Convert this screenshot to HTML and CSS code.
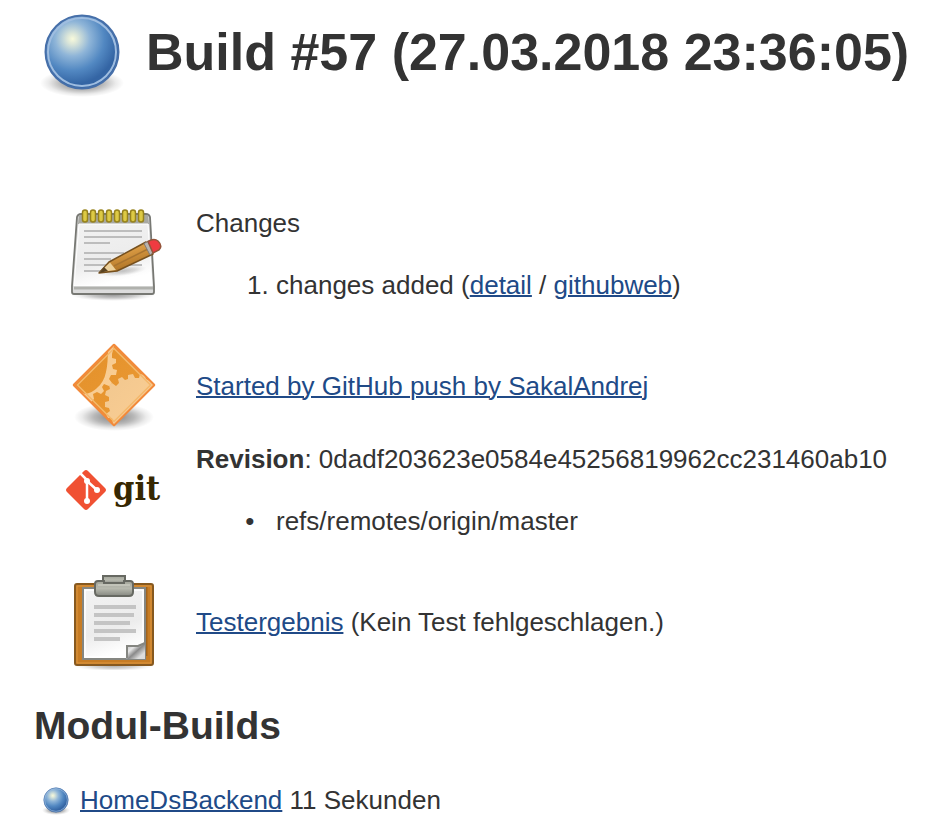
FILE: index.html
```html
<!DOCTYPE html>
<html lang="de">
<head>
<meta charset="utf-8">
<meta name="viewport" content="width=device-width, initial-scale=1">
<title>Build #57</title>
<link rel="stylesheet" href="styles.css">
</head>
<body>
<svg class="defs" width="0" height="0" aria-hidden="true">
  <defs>
    <radialGradient id="ball" cx=".37" cy=".32" r=".62">
      <stop offset="0" stop-color="#f8fadb"/><stop offset=".12" stop-color="#dbe6d9"/>
      <stop offset=".38" stop-color="#8fb5d8"/><stop offset=".7" stop-color="#5288c2"/>
      <stop offset="1" stop-color="#3465a4"/>
    </radialGradient>
    <radialGradient id="shade">
      <stop offset="0" stop-color="#000" stop-opacity=".5"/>
      <stop offset=".5" stop-color="#000" stop-opacity=".28"/>
      <stop offset=".8" stop-color="#000" stop-opacity=".08"/>
      <stop offset="1" stop-color="#000" stop-opacity="0"/>
    </radialGradient>
    <linearGradient id="paper" x2=".3" y2="1">
      <stop offset="0" stop-color="#f2f2f2"/><stop offset=".65" stop-color="#ececec"/><stop offset="1" stop-color="#fff"/>
    </linearGradient>
    <linearGradient id="wood" x2=".45" y2="1">
      <stop offset="0" stop-color="#e9b866"/><stop offset=".5" stop-color="#d4953f"/><stop offset="1" stop-color="#a66d22"/>
    </linearGradient>
    <linearGradient id="metal" x2="0" y2="1">
      <stop offset="0" stop-color="#a3a59b"/><stop offset=".5" stop-color="#b7b9ae"/><stop offset="1" stop-color="#858780"/>
    </linearGradient>
    <linearGradient id="curl" x2="1" y2="1">
      <stop offset="0" stop-color="#b4b4b4"/><stop offset=".35" stop-color="#e6e6e6"/><stop offset=".55" stop-color="#8a8a8a"/><stop offset=".8" stop-color="#ddd"/>
    </linearGradient>
    <linearGradient id="amber" x2="1" y2="1">
      <stop offset="0" stop-color="#e2902a"/><stop offset="1" stop-color="#ed9b35"/>
    </linearGradient>
    <linearGradient id="cream" x2="1" y2="1">
      <stop offset="0" stop-color="#f1c78f"/><stop offset="1" stop-color="#fccf94"/>
    </linearGradient>
    <symbol id="status" viewBox="0 0 96 96">
      <ellipse cx="48" cy="79" rx="42" ry="14" fill="url(#shade)"/>
      <circle cx="48" cy="48" r="36.5" fill="url(#ball)" stroke="#466fa9" stroke-width="2"/>
      <circle cx="48" cy="48" r="34" fill="none" stroke="#9fbde0" stroke-width="2"/>
    </symbol>
  </defs>
</svg>

<main class="build">
  <header class="title">
    <svg class="icon" role="img" aria-label="Erfolgreich"><use href="#status"/></svg>
    <h1>Build #57 (27.03.2018 23:36:05)</h1>
  </header>

  <div class="summary">
    <section class="entry">
      <svg class="icon" viewBox="0 2 96 96" aria-hidden="true">
        <ellipse cx="47" cy="91" rx="42" ry="6" fill="url(#shade)" opacity=".8"/>
        <path d="M11 13Q12 10 15 10H80Q83 10 84 13L88 82V88Q88 90 86 90H8Q6 90 6 88V82Z" fill="#dcdcdc" stroke="#777873" stroke-width="1.8"/>
        <path d="M13 11H82L83 20H12Z" fill="#a7a8a2"/>
        <path d="M13 20H82L86 82H8Z" fill="url(#paper)" stroke="#fff" stroke-width="1"/>
        <path d="M8 84H87" stroke="#b0b1ad" stroke-width="3"/>
        <path d="M18 27H76M18 33H76M18 39H44M18 49H58M18 55H45M18 61H40M18 67H35M62 61H76" stroke="#bdbdbd" stroke-width="2"/>
        <g fill="#ddca45" stroke="#97831d" stroke-width="1.5">
          <rect x="16.500" y="6" width="5" height="12" rx="2.500"/><rect x="24.500" y="6" width="5" height="12" rx="2.500"/>
          <rect x="32.500" y="6" width="5" height="12" rx="2.500"/><rect x="40.500" y="6" width="5" height="12" rx="2.500"/>
          <rect x="48.500" y="6" width="5" height="12" rx="2.500"/><rect x="56.500" y="6" width="5" height="12" rx="2.500"/>
          <rect x="64.500" y="6" width="5" height="12" rx="2.500"/><rect x="72.500" y="6" width="5" height="12" rx="2.500"/>
        </g>
        <ellipse cx="57" cy="67" rx="24" ry="5" fill="url(#shade)" opacity=".45" transform="rotate(-7 57 67)"/>
        <path d="M33 69L43 58L80 38L87 50L51 67Z" fill="url(#wood)" stroke="#76501e" stroke-width="1.500" stroke-linejoin="round"/>
        <path d="M34 68L44 58.500L50 66Z" fill="#ecd19c"/>
        <path d="M33 69L38 63L42 67Z" fill="#584222"/>
        <path d="M48 62L82 45" stroke="#a87430" stroke-width="1.500"/>
        <path d="M78 39.500L83 37L88 48L84 51Z" fill="#b8b4b0" stroke="#817a76"/>
        <path d="M82 37.500Q88 34 92 37Q97 42 93 46L87 49Z" fill="#ef3b41" stroke="#94543a" stroke-width="1.500"/>
      </svg>
      <div class="content">
        <p>Changes</p>
        <ol><li>changes added (<a href="#detail">detail</a> / <a href="#githubweb">githubweb</a>)</li></ol>
      </div>
    </section>

    <section class="entry">
      <svg class="icon" viewBox="0 0 96 96" aria-hidden="true">
        <clipPath id="diamond"><path d="M48 8L87 47L48 86L9 47Z"/></clipPath>
        <ellipse cx="48" cy="79" rx="40" ry="14" fill="url(#shade)"/>
        <path d="M48 7L88 47L48 87L8 47Z" fill="url(#amber)" stroke="#f28a3b" stroke-width="2.500" stroke-linejoin="round"/>
        <g clip-path="url(#diamond)">
          <path d="M42 8H48L46 16L46 20L50 21V25L46 27L47 31L51 32L50 37L45 37L43 41L46 45L43 48L38 46L36 49L38 53L35 56L31 54L27 56L28 61L24 65L6 50L19 56Q26 55 31 50Q38 44 40 34Q42 26 42 8Z" fill="url(#cream)"/>
          <path d="M44 51L43 47L46 45L50 48L53 45L52 41L56 39L59 42L62 41L62 37L67 36L69 40L73 40L74 36L79 37L80 41L92 47L48 92L46 80L42 80L40 76L44 73L43 70L39 69L39 64L43 63L43 59L39 57L40 53Z" fill="url(#cream)"/>
        </g>
        <path d="M48 10.500L84.500 47L48 83.500L11.500 47Z" fill="none" stroke="#f4b86b" stroke-width="1.500"/>
      </svg>
      <div class="content"><p><a href="#cause">Started by GitHub push by SakalAndrej</a></p></div>
    </section>

    <section class="entry">
      <svg class="icon" viewBox="0 0 96 96" role="img" aria-label="git">
        <path d="M18 29Q20 27 22 29L39 46Q41 48 39 50L22 67Q20 69 18 67L1 50Q-1 48 1 46Z" fill="#f05133"/>
        <path d="M14 31L21 38V60M21 39L31 48" fill="none" stroke="#fff" stroke-width="2.500"/>
        <circle cx="21" cy="39" r="3" fill="#fff"/><circle cx="31" cy="48" r="3" fill="#fff"/><circle cx="21" cy="59" r="3" fill="#fff"/>
        <text class="wordmark" x="47" y="58">git</text>
      </svg>
      <div class="content">
        <p><b>Revision</b>: 0dadf203623e0584e45256819962cc231460ab10</p>
        <ul><li>refs/remotes/origin/master</li></ul>
      </div>
    </section>

    <section class="entry">
      <svg class="icon" viewBox="0 0 96 96" aria-hidden="true">
        <ellipse cx="48" cy="92" rx="40" ry="5" fill="url(#shade)" opacity=".6"/>
        <rect x="9" y="10" width="78" height="81" rx="2" fill="#c77c24" stroke="#87591f" stroke-width="2"/>
        <rect x="11" y="12" width="74" height="77" fill="none" stroke="#dc9641"/>
        <path d="M80 13V82" stroke="#a2641d" stroke-width="3"/>
        <rect x="17" y="14" width="62" height="71" fill="url(#paper)" stroke="#858681" stroke-width="2"/>
        <rect x="19" y="16" width="58" height="67" fill="none" stroke="#fff" stroke-width="1.500"/>
        <path d="M28 33H70M28 41H68M28 49H64M28 57H70M28 65H54" stroke="#c4c4c4" stroke-width="4"/>
        <path d="M60 72H72L79 68V85H60Z" fill="url(#curl)"/>
        <path d="M61 84V72H72L79 69" fill="none" stroke="#858681" stroke-width="2"/>
        <path d="M37 2H59V10H37Z" fill="url(#metal)" stroke="#676962" stroke-width="2"/>
        <path d="M32 7H38V9H58V7H64Q67 7 67 10V18Q67 22 63 22H33Q29 22 29 18V10Q29 7 32 7Z" fill="url(#metal)" stroke="#676962" stroke-width="2"/>
        <path d="M32 11H64" stroke="#c8cabf" stroke-width="1.500"/>
      </svg>
      <div class="content"><p><a href="#tests">Testergebnis</a> (Kein Test fehlgeschlagen.)</p></div>
    </section>
  </div>

  <h2>Modul-Builds</h2>
  <div class="module">
    <svg class="dot" role="img" aria-label="Erfolgreich"><use href="#status"/></svg>
    <p><a href="#module">HomeDsBackend</a> 11 Sekunden</p>
  </div>
</main>
</body>
</html>
```
FILE: styles.css
```css
* { box-sizing: border-box; }
body {
  margin: 0;
  background: #fff;
  color: #333;
  font: 26px/30px "Liberation Sans", Arial, sans-serif;
}
a {
  color: #204a87;
  text-decoration: underline;
  text-decoration-thickness: 2px;
}
h1, h2, p { margin: 0; }
.defs { position: absolute; }
.build { padding: 4px 16px 12px 34px; }
.title {
  display: flex;
  align-items: center;
  gap: 16px;
}
h1 {
  font-size: 52px;
  line-height: 60px;
}
.icon {
  flex: none;
  width: 96px;
  height: 96px;
}
.summary {
  display: grid;
  gap: 8px;
  margin: 106px 0 0 32px;
}
.entry {
  display: flex;
  align-items: center;
  gap: 34px;
}
.entry:first-child { margin-bottom: 28px; }
.entry:last-child { margin-top: 28px; }
ol, ul {
  margin: 32px 0 0;
  padding-left: 80px;
}
ul { list-style-type: "•\00a0\00a0\00a0"; }
.wordmark {
  fill: #362701;
  font: bold 34px "DejaVu Serif Condensed", "DejaVu Serif", serif;
}
h2 {
  margin-top: 34px;
  font-size: 39px;
  line-height: 44px;
}
.module {
  display: flex;
  align-items: center;
  gap: 8px;
  margin: 36px 0 0 6px;
}
.dot {
  width: 32px;
  height: 32px;
}
```
